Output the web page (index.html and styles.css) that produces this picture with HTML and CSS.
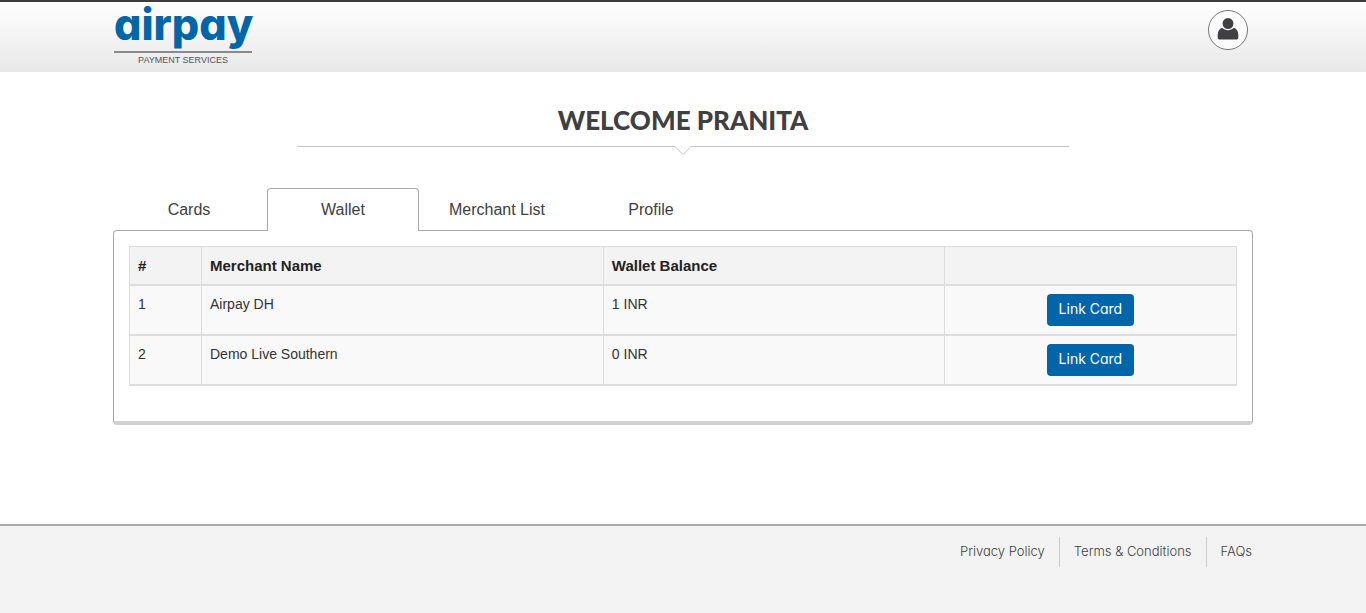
FILE: index.html
```html
<!DOCTYPE html>
<html lang="en">
<head>
<meta charset="utf-8">
<meta name="viewport" content="width=device-width, initial-scale=1">
<title>airpay - Wallet</title>
<link rel="stylesheet" href="styles.css">
</head>
<body>
<header class="site-header">
  <div class="container header-row">
    <a class="logo" href="#">
      <span class="logo-name">airpay</span>
      <span class="logo-tag">PAYMENT SERVICES</span>
    </a>
    <button class="user-button" type="button" aria-label="Account">
      <svg width="22" height="24" viewBox="0 0 22 24" aria-hidden="true">
        <ellipse cx="11" cy="5.500" rx="5.400" ry="5.500"/>
        <path d="M5.200 9.800C2.200 10.600.7 13.600.7 17v2.400c0 1.300.9 2.200 2.200 2.200h16.200c1.300 0 2.200-.9 2.200-2.200V17c0-3.400-1.500-6.400-4.500-7.200C15.400 11.500 13.300 12.200 11 12.200s-4.400-.7-5.800-2.400z"/>
      </svg>
    </button>
  </div>
</header>

<main class="container main">
  <div class="title-block">
    <h1 class="title">WELCOME PRANITA</h1>
    <svg class="notch" width="18" height="10" viewBox="0 0 18 10" aria-hidden="true">
      <path class="notch-gap" d="M1 0h16L9 8z"/>
      <path class="notch-line" d="M0 .5h1L9 8.500 17 .5h1"/>
    </svg>
  </div>

  <nav class="tabs" aria-label="Account sections">
    <a class="tab" href="#">Cards</a>
    <a class="tab tab-active" href="#" aria-current="page">Wallet</a>
    <a class="tab" href="#">Merchant List</a>
    <a class="tab" href="#">Profile</a>
  </nav>

  <section class="panel">
    <table class="wallets">
      <thead>
        <tr><th class="col-num" scope="col">#</th><th class="col-name" scope="col">Merchant Name</th><th class="col-balance" scope="col">Wallet Balance</th><td></td></tr>
      </thead>
      <tbody>
        <tr><td>1</td><td>Airpay DH</td><td>1 INR</td><td class="action"><button class="link-card" type="button">Link Card</button></td></tr>
        <tr><td>2</td><td>Demo Live Southern</td><td>0 INR</td><td class="action"><button class="link-card" type="button">Link Card</button></td></tr>
      </tbody>
    </table>
  </section>
</main>

<footer class="site-footer">
  <nav class="container footer-links" aria-label="Footer">
    <a href="#">Privacy Policy</a>
    <a href="#">Terms &amp; Conditions</a>
    <a href="#">FAQs</a>
  </nav>
</footer>
</body>
</html>
```

FILE: styles.css
```css
* {
  box-sizing: border-box;
}

body {
  display: flex;
  flex-direction: column;
  min-height: 100vh;
  margin: 0;
  background: #fff;
  color: #333;
  font: 14px/20px "Liberation Sans", Arial, sans-serif;
}

a {
  color: inherit;
  text-decoration: none;
}

.container {
  width: 100%;
  max-width: 1140px;
  margin: 0 auto;
}

.site-header {
  border-top: 2px solid #3f3d40;
  background: linear-gradient(#fff, #e8e8e8);
}

.header-row {
  display: flex;
  justify-content: space-between;
  align-items: flex-start;
  height: 70px;
}

.logo {
  display: flex;
  flex-direction: column;
  width: 138px;
  margin-left: 1px;
}

.logo-name {
  height: 49px;
  color: #0066a9;
  font: 800 43px/44px Inter, sans-serif;
  font-feature-settings: "cv11";
  text-align: center;
}

.logo-tag {
  padding-top: 2px;
  border-top: 2px solid #8a8a8a;
  color: #555;
  font-size: 9px;
  line-height: 10px;
  text-align: center;
  white-space: nowrap;
}

.user-button {
  display: flex;
  align-items: center;
  justify-content: center;
  width: 40px;
  height: 40px;
  margin: 8px 5px 0 0;
  padding: 0;
  border: 1px solid #777;
  border-radius: 50%;
  background: #fcfcfc;
  fill: #403f41;
}

.main {
  flex: 1;
  padding-bottom: 99px;
}

.title-block {
  display: flex;
  flex-direction: column;
  align-items: center;
  width: 772px;
  max-width: 100%;
  margin: 0 auto 32px;
  padding-top: 28px;
}

.title {
  width: 100%;
  margin: 0;
  padding-bottom: 6px;
  border-bottom: 1px solid #c4c4c4;
  color: #404042;
  font: 900 26px/40px Lato, sans-serif;
  text-align: center;
}

.notch {
  margin-top: -1px;
}

.notch-gap {
  fill: #fff;
  stroke: #fff;
}

.notch-line {
  fill: none;
  stroke: #c4c4c4;
}

.tabs {
  display: flex;
  gap: 2px;
  position: relative;
  margin-bottom: -1px;
}

.tab {
  width: 152px;
  padding: 10px 0 11px;
  border: 1px solid transparent;
  border-bottom: 0;
  border-radius: 4px 4px 0 0;
  color: #404042;
  font-size: 16px;
  line-height: 21px;
  text-align: center;
}

.tab-active {
  border-color: #aaa;
  background: #fff;
}

.panel {
  padding: 15px 15px 35px;
  border: 1px solid #aaa;
  border-bottom: 4px solid #d0d0d5;
  border-radius: 4px;
}

.wallets {
  width: 100%;
  table-layout: fixed;
  border: 1px solid #ddd;
  border-width: 1px 0 0 1px;
  border-spacing: 0;
  background: #f9f9f9;
}

.wallets th,
.wallets td {
  padding: 8px;
  border: 1px solid #ddd;
  border-width: 0 1px 2px 0;
  text-align: left;
  vertical-align: top;
}

.wallets thead th,
.wallets thead td {
  height: 39px;
  background: #f3f3f3;
  color: #222;
  font-size: 15px;
  vertical-align: middle;
}

.col-num {
  width: 72px;
}

.col-name {
  width: 36.3%;
}

.col-balance {
  width: 30.8%;
}

.wallets .action {
  text-align: center;
}

.link-card {
  display: block;
  height: 32px;
  margin: 0 auto;
  padding: 0 12px 2px;
  border: 0;
  border-radius: 4px;
  background: #0066a9;
  color: #fff;
  font: 400 14px/20px Inter, sans-serif;
  font-feature-settings: "cv11";
}

.site-footer {
  min-height: 89px;
  padding-top: 11px;
  border-top: 2px solid #aaa;
  background: #f3f3f3;
}

.footer-links {
  display: flex;
  justify-content: flex-end;
}

.footer-links a {
  height: 30px;
  padding: 0 14px;
  border-left: 1px solid #ccc;
  color: #404042;
  font: 300 13px/28px Inter, sans-serif;
  font-feature-settings: "cv11";
}

.footer-links a:first-child {
  border-left: 0;
}

.footer-links a:last-child {
  padding-right: 1px;
}
```
